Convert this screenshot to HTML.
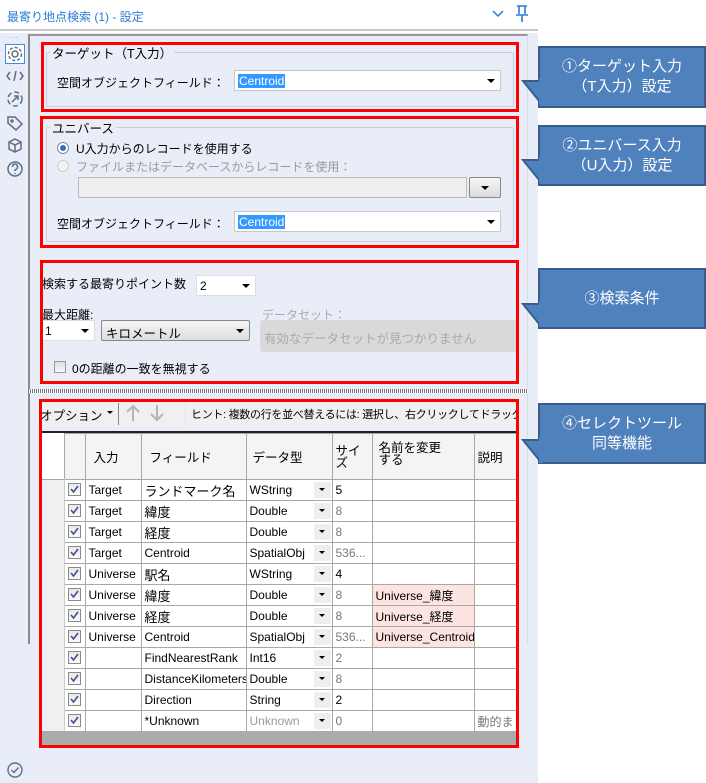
<!DOCTYPE html>
<html><head><meta charset="utf-8"><style>
*{box-sizing:border-box;margin:0;padding:0}
body{width:706px;height:783px;position:relative;background:#fff;font-family:"Liberation Sans","Noto Sans CJK JP",sans-serif;font-size:12px;color:#000;overflow:hidden}
.a{position:absolute}
.red{position:absolute;border:3px solid #f00}
.call{position:absolute;background:#4f81bd;border:2px solid #385d8a;color:#fff;font-size:15px;text-align:center;line-height:20px}
.dd{position:absolute;background:#fff;border:1px solid #c8c8c8}
.sel{background:#3399ff;color:#fff;padding:0 1px}
.tri{position:absolute;width:0;height:0;border-left:4px solid transparent;border-right:4px solid transparent;border-top:4px solid #000}
.cb{position:absolute;width:13px;height:13px;border:1px solid #8a8a8a;background:linear-gradient(#e8e8e8,#fafafa)}
.grid td{border:1px solid #a8a8a8;height:21px;padding:0 3px;white-space:nowrap;overflow:hidden;font-size:12px}
.grid{border-collapse:collapse;table-layout:fixed}
.g{color:#777}
.pk{background:#fde4e1}
</style></head><body>
<!-- header -->
<div class="a" style="left:0;top:0;width:538px;height:31px;border-bottom:2px solid #c8c8c8;background:#fff"></div>
<div class="a" style="left:7px;top:8px;color:#2a7bd6;font-size:12px">最寄り地点検索 (1) - 設定</div>
<svg class="a" style="left:492px;top:10px" width="12" height="8"><path d="M1 1 L6 6 L11 1" stroke="#2a7bd6" stroke-width="1.5" fill="none"/></svg>
<svg class="a" style="left:515px;top:5px" width="14" height="18"><path d="M2 1H12M4 1V9M10 1V9M1 10H13M7 10V17" stroke="#2a7bd6" stroke-width="1.6" fill="none"/></svg>
<!-- left sidebar + panel -->
<div class="a" style="left:0;top:33px;width:538px;height:750px;background:#e9edf7"></div>
<div class="a" style="left:28px;top:34px;width:500px;height:610px;border-left:2px solid #8a8a8a;border-top:2px solid #999;border-right:1px solid #d8dce6"></div>
<div class="a" style="left:8px;top:33px;color:#999;font-size:8px;letter-spacing:1px">···</div>
<div class="a" style="left:5px;top:44px;width:20px;height:20px;border:1px solid #3c8ee6;background:#fff"></div>
<svg class="a" style="left:0;top:40px" width="30" height="140" fill="none" stroke="#5c6f87" stroke-width="1.5">
<circle cx="15" cy="14" r="3"/><circle cx="15" cy="14" r="6.5" stroke-dasharray="3 2"/>
<path d="M10 32 L7 36 L10 40 M20 32 L23 36 L20 40 M16 31 L14 41"/>
<circle cx="15" cy="59" r="7" stroke-dasharray="5 3"/><path d="M12 62 L18 56 M14 56 H18 V60"/>
<path d="M8 77 H15 L22 84 L16 90 L8 83 Z"/><circle cx="12" cy="81" r="1"/>
<path d="M15 99 L21 102 V109 L15 112 L9 109 V102 Z M9 102 L15 105 L21 102 M15 105 V112"/>
<circle cx="15" cy="129" r="7"/><path d="M12.5 127 Q12.5 124 15 124 Q17.5 124 17.5 127 Q17.5 129 15 130 V131 M15 133 V134"/>
</svg>
<svg class="a" style="left:6px;top:761px" width="18" height="18" fill="none" stroke="#5c6f87" stroke-width="1.4"><circle cx="9" cy="9" r="7"/><path d="M5.5 9 L8 11.5 L12.5 6.5"/></svg>

<!-- section 1 -->
<div class="a" style="left:46px;top:52px;width:468px;height:55px;border:1px solid #c8cfdb;border-radius:2px"></div>
<div class="a" style="left:50px;top:43px;background:#e9edf7;padding:0 2px;font-size:12.5px">ターゲット（T入力）</div>
<div class="a" style="left:57px;top:74px">空間オブジェクトフィールド：</div>
<div class="dd" style="left:234px;top:70px;width:267px;height:21px"><span class="a sel" style="left:3px;top:3px">Centroid</span><div class="tri" style="right:5px;top:8px"></div></div>
<div class="red" style="left:41px;top:42px;width:478px;height:70px"></div>

<!-- section 2 -->
<div class="a" style="left:46px;top:127px;width:468px;height:115px;border:1px solid #c8cfdb;border-radius:2px"></div>
<div class="a" style="left:50px;top:118px;background:#e9edf7;padding:0 2px;font-size:12.5px">ユニバース</div>
<div class="a" style="left:57px;top:142px;width:12px;height:12px;border-radius:50%;border:1px solid #888;background:#fff"><div class="a" style="left:2px;top:2px;width:6px;height:6px;border-radius:50%;background:#2a6fc9"></div></div>
<div class="a" style="left:76px;top:140px">U入力からのレコードを使用する</div>
<div class="a" style="left:57px;top:160px;width:12px;height:12px;border-radius:50%;border:1px solid #ccc;background:#f2f2f2"></div>
<div class="a" style="left:76px;top:158px;color:#999">ファイルまたはデータベースからレコードを使用：</div>
<div class="a" style="left:78px;top:177px;width:389px;height:21px;background:#efefef;border:1px solid #bbb"></div>
<div class="a" style="left:469px;top:177px;width:32px;height:21px;background:linear-gradient(#f6f6f6,#dcdcdc);border:1px solid #888;border-radius:2px"><div class="tri" style="left:11px;top:8px"></div></div>
<div class="a" style="left:57px;top:215px">空間オブジェクトフィールド：</div>
<div class="dd" style="left:234px;top:211px;width:267px;height:21px"><span class="a sel" style="left:3px;top:3px">Centroid</span><div class="tri" style="right:5px;top:8px"></div></div>
<div class="red" style="left:40px;top:116px;width:479px;height:132px"></div>

<!-- section 3 -->
<div class="a" style="left:42px;top:275px">検索する最寄りポイント数</div>
<div class="dd" style="left:196px;top:275px;width:60px;height:21px;border-color:#ddd"><span class="a" style="left:3px;top:3px">2</span><div class="tri" style="right:5px;top:8px"></div></div>
<div class="a" style="left:42px;top:306px">最大距離:</div>
<div class="dd" style="left:42px;top:320px;width:53px;height:21px;border-color:#ddd"><span class="a" style="left:2px;top:3px">1</span><div class="tri" style="right:5px;top:8px"></div></div>
<div class="a" style="left:101px;top:320px;width:149px;height:21px;background:linear-gradient(#f4f4f4,#dedede);border:1px solid #888;border-radius:2px"><span class="a" style="left:4px;top:2px;font-size:12.5px">キロメートル</span><div class="tri" style="right:5px;top:8px"></div></div>
<div class="a" style="left:262px;top:306px;color:#aaa">データセット：</div>
<div class="a" style="left:260px;top:320px;width:258px;height:32px;background:#d9d9d9;border-radius:3px"><span class="a" style="left:4px;top:8px;color:#aaa;font-size:12.5px">有効なデータセットが見つかりません</span></div>
<div class="a" style="left:54px;top:361px;width:12px;height:12px;border:1px solid #999;background:linear-gradient(#ddd,#f8f8f8)"></div>
<div class="a" style="left:72px;top:360px">0の距離の一致を無視する</div>
<div class="red" style="left:40px;top:260px;width:479px;height:124px"></div>

<!-- splitter -->
<div class="a" style="left:28px;top:389px;width:500px;height:4px;background:repeating-linear-gradient(90deg,#777 0 1px,#fff 1px 2px)"></div>
<div class="a" style="left:28px;top:396px;width:2px;height:248px;background:#8a8a8a"></div>

<!-- section 4 -->
<div class="a" style="left:36px;top:401px;width:147px;height:26px;background:#f0f0f0"></div>
<div class="a" style="left:40px;top:405px;font-size:12.5px">オプション</div>
<div class="tri" style="left:107px;top:411px;border-width:3px 3px 0 3px"></div>
<div class="a" style="left:118px;top:403px;width:1px;height:22px;background:#888"></div>
<svg class="a" style="left:124px;top:403px" width="44" height="20" fill="none" stroke="#b5b5b5" stroke-width="2"><path d="M9 18V3 M3 9 L9 3 L15 9 M33 2V17 M27 11 L33 17 L39 11"/></svg>
<div class="a" style="left:186px;top:402px;width:332px;height:26px;background:#f0f0f0;overflow:hidden"><div class="a" style="left:5px;top:4px;font-size:11px;white-space:nowrap;letter-spacing:-0.3px">ヒント: 複数の行を並べ替えるには: 選択し、右クリックしてドラッグします。</div></div>
<div class="a" style="left:40px;top:431px;width:478px;height:2px;background:#222"></div>
<div class="a" style="left:40px;top:433px;width:478px;height:298px;background:#fff;overflow:hidden">
<table class="grid" style="position:absolute;left:0;top:0;width:500px">
<colgroup><col style="width:24px"><col style="width:21px"><col style="width:56px"><col style="width:105px"><col style="width:86px"><col style="width:40px"><col style="width:102px"><col style="width:66px"></colgroup>
<tr style="height:46px;background:#f4f4f4"><td style="border-left:none;border-top:none;background:#fff"></td><td></td><td style="padding-left:8px;font-size:12.5px">入力</td><td style="padding-left:8px;font-size:12.5px">フィールド</td><td style="padding-left:6px;font-size:12.5px">データ型</td><td style="white-space:normal;line-height:12px;font-size:12.5px">サイズ</td><td style="line-height:12px;padding-left:6px;font-size:12.5px;vertical-align:top;padding-top:8px">名前を変更<br>する</td><td style="font-size:12.5px">説明</td></tr>
</table>
</div>
<div id="rows" class="a" style="left:40px;top:479px;width:478px;height:252px;overflow:hidden"></div>
<div class="a" style="left:40px;top:731px;width:478px;height:14px;background:#ababab"></div>
<div class="red" style="left:39px;top:399px;width:480px;height:349px;border-top-width:3px"></div>

<!-- callouts -->
<div class="call" style="left:538px;top:46px;width:168px;height:62px;padding-top:9px">①ターゲット入力<br>（T入力）設定</div>
<div class="call" style="left:538px;top:125px;width:168px;height:61px;padding-top:9px">②ユニバース入力<br>（U入力）設定</div>
<div class="call" style="left:538px;top:268px;width:168px;height:61px;padding-top:19px">③検索条件</div>
<div class="call" style="left:538px;top:403px;width:168px;height:61px;padding-top:9px">④セレクトツール<br>同等機能</div>
<svg class="a" style="left:515px;top:0" width="30" height="500">
<g fill="#4f81bd" stroke="#385d8a" stroke-width="2" stroke-linejoin="miter">
<path d="M540 81 L523 81 L540 102" transform="translate(-515,0)"/>
<path d="M540 160 L523 160 L540 181" transform="translate(-515,0)"/>
<path d="M540 304 L523 304 L540 325" transform="translate(-515,0)"/>
<path d="M540 440 L523 440 L540 461" transform="translate(-515,0)"/>
</g>
<g fill="#4f81bd"><rect x="24" y="78" width="4" height="26"/><rect x="24" y="157" width="4" height="26"/><rect x="24" y="301" width="4" height="26"/><rect x="24" y="437" width="4" height="26"/></g>
</svg>

<script>
var d=[["Target","ランドマーク名","WString","5",0,""],["Target","緯度","Double","8",1,""],["Target","経度","Double","8",1,""],["Target","Centroid","SpatialObj","536...",1,""],["Universe","駅名","WString","4",0,""],["Universe","緯度","Double","8",1,"Universe_緯度"],["Universe","経度","Double","8",1,"Universe_経度"],["Universe","Centroid","SpatialObj","536...",1,"Universe_Centroid"],["","FindNearestRank","Int16","2",1,""],["","DistanceKilometers","Double","8",1,""],["","Direction","String","2",0,""],["","*Unknown","Unknown","0",1,"","動的ま"]];
var h='<table class="grid" style="width:500px"><colgroup><col style="width:24px"><col style="width:21px"><col style="width:56px"><col style="width:105px"><col style="width:86px"><col style="width:40px"><col style="width:102px"><col style="width:66px"></colgroup>';
d.forEach(function(r,i){h+='<tr><td style="background:#f0f0f0;border-left:none;border-top:none;border-bottom:none;border-right:1px solid #ccc"></td><td style="position:relative"><div class="cb" style="left:3px;top:3px"><svg width="11" height="11" style="position:absolute;left:0;top:0"><path d="M2 5 L4.5 8 L9 2" stroke="#3c4f9a" stroke-width="1.6" fill="none"/></svg></div></td><td>'+r[0]+'</td><td style="font-size:'+(/[^\x00-\x7f]/.test(r[1])?13:12)+'px">'+r[1]+'</td><td style="position:relative'+(r[2]=="Unknown"?';color:#999':'')+'">'+r[2]+'<div style="position:absolute;right:1px;top:2px;width:17px;height:16px;background:#eee"><div class="tri" style="left:5px;top:6px;border-width:3px 3px 0 3px"></div></div></td><td'+(r[4]?' class="g"':'')+'>'+r[3]+'</td><td'+(r[5]?' class="pk"':'')+'>'+r[5]+'</td><td class="g">'+(r[6]||'')+'</td></tr>';});
document.getElementById('rows').innerHTML=h+'</table>';
</script>
</body></html>
